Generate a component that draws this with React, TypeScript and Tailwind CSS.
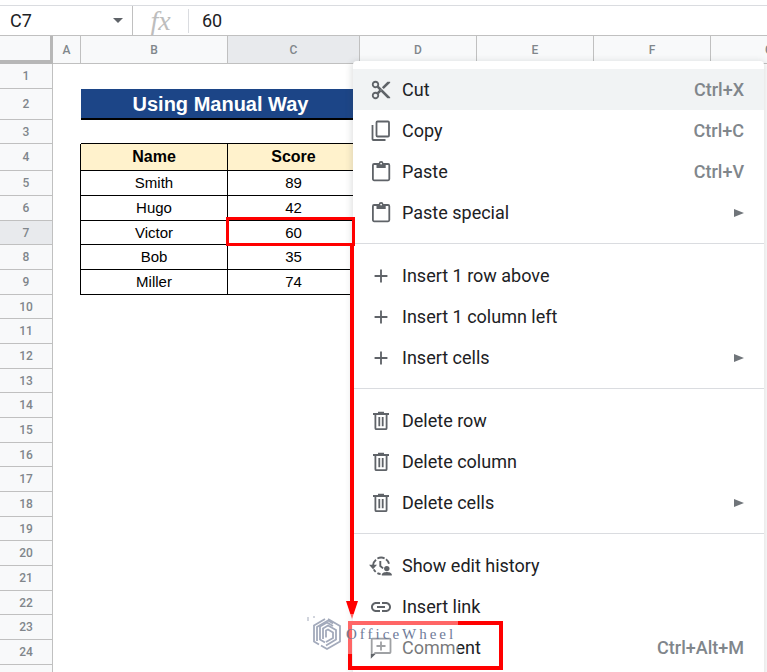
import type { ReactNode } from 'react'
import clsx from 'clsx'
import { MdAdd, MdContentCut, MdLink } from 'react-icons/md'

type Item = {
  label: string
  icon: ReactNode
  shortcut?: string
  submenu?: boolean
  active?: boolean
}

function CopyIcon() {
  return (
    <svg viewBox="0 0 24 24" fill="none" stroke="currentColor" strokeWidth="1.8" className="size-6">
      <rect x="7.500" y="2.500" width="12.500" height="15" rx="1" />
      <path d="M3.500 6v14.200c0 .5.3.8.8.8H16.500" />
    </svg>
  )
}

function PasteIcon() {
  return (
    <svg viewBox="0 0 24 24" fill="none" stroke="currentColor" strokeWidth="1.800" className="size-6">
      <rect x="3.900" y="4" width="16.400" height="16.300" rx="1.200" />
      <path d="M7.500 3.500h2.200a2.400 2.400 0 0 1 4.800 0h2.200V8H7.500z" fill="currentColor" stroke="none" />
      <circle cx="12.100" cy="3.600" r="0.900" fill="#fff" stroke="none" />
    </svg>
  )
}

function TrashIcon() {
  return (
    <svg viewBox="0 0 24 24" fill="none" stroke="currentColor" strokeWidth="1.800" className="size-6">
      <path d="M4 5h16M9 3.600h6" />
      <path d="M6.400 5v14.200c0 .6.4 1 1 1h9.200c.6 0 1-.4 1-1V5" />
      <path d="M10.300 8v9.200M13.700 8v9.200" />
    </svg>
  )
}

function HistoryIcon() {
  return (
    <svg viewBox="0 0 24 24" fill="none" stroke="currentColor" strokeWidth="1.900" className="size-6">
      <path d="M4 11.500a8.200 8.200 0 0 1 3-5.800M8.400 4.500a8.200 8.200 0 0 1 7.200-.2M17 5.200a8.200 8.200 0 0 1 3 4.600" />
      <path d="M4.800 15.300a8.200 8.200 0 0 0 1.900 2.600M8.400 19.100a8.200 8.200 0 0 0 3.200.9" />
      <path d="M11.300 7v5l2.800 2.400" />
      <path d="M0 10.800h8l-4 4.400z" fill="currentColor" stroke="none" />
      <circle cx="17.800" cy="14.600" r="2.700" fill="currentColor" stroke="none" />
      <path d="M12.800 21.500v-1c0-1.700 3.300-2.500 5-2.500s5 .8 5 2.500v1z" fill="currentColor" stroke="none" />
    </svg>
  )
}

function CommentIcon() {
  return (
    <svg viewBox="0 0 24 24" fill="none" stroke="currentColor" strokeWidth="1.800" className="size-6">
      <path d="M2.700 20.500V3.500c0-.5.3-.8.8-.8h17.200c.5 0 .8.300.8.800v12.700c0 .5-.3.800-.8.800H6.200z" />
      <path d="M12 5.500v9M7.500 10h9" />
    </svg>
  )
}

const groups: Item[][] = [
  [
    { label: 'Cut', icon: <MdContentCut className="size-[22px]" />, shortcut: 'Ctrl+X', active: true },
    { label: 'Copy', icon: <CopyIcon />, shortcut: 'Ctrl+C' },
    { label: 'Paste', icon: <PasteIcon />, shortcut: 'Ctrl+V' },
    { label: 'Paste special', icon: <PasteIcon />, submenu: true },
  ],
  [
    { label: 'Insert 1 row above', icon: <MdAdd className="size-[22px]" /> },
    { label: 'Insert 1 column left', icon: <MdAdd className="size-[22px]" /> },
    { label: 'Insert cells', icon: <MdAdd className="size-[22px]" />, submenu: true },
  ],
  [
    { label: 'Delete row', icon: <TrashIcon /> },
    { label: 'Delete column', icon: <TrashIcon /> },
    { label: 'Delete cells', icon: <TrashIcon />, submenu: true },
  ],
  [
    { label: 'Show edit history', icon: <HistoryIcon /> },
    { label: 'Insert link', icon: <MdLink className="size-6" /> },
    { label: 'Comment', icon: <CommentIcon />, shortcut: 'Ctrl+Alt+M' },
  ],
]

const scores: Record<number, [string, string]> = {
  5: ['Smith', '89'],
  6: ['Hugo', '42'],
  7: ['Victor', '60'],
  8: ['Bob', '35'],
  9: ['Miller', '74'],
}

const columns = ['A', 'B', 'C', 'D', 'E', 'F', 'G']
const rows = Array.from({ length: 25 }, (_, i) => i + 1)

function rowHeight(row: number) {
  if (row === 2) return 'h-[31px]'
  if (row === 4) return 'h-[27px]'
  // rows drift between 24 and 25 at this zoom level
  return row === 3 || (row > 4 && row % 3 === 1) ? 'h-[24px]' : 'h-[25px]'
}

function FormulaBar() {
  return (
    <div className="flex h-9 flex-col pt-[5px]">
      <div className="flex flex-1 items-center border-y border-t-[#dadce0] border-b-[#c0c0c0] text-lg text-[#202124]">
        <input aria-label="Name box" defaultValue="C7" className="w-[104px] pl-[10px] leading-6 outline-none" />
        <button aria-label="Open named ranges" className="flex h-full w-[29px] items-center justify-center border-r border-[#c0c0c0]">
          <svg viewBox="0 0 10 5" fill="#5f6368" className="h-[5px] w-[10px]">
            <path d="M0 0h10L5 5z" />
          </svg>
        </button>
        <span className="w-[55px] text-center font-['Liberation_Serif',serif] text-[28px] leading-6 text-[#bdbdbd] italic">
          fx
        </span>
        <input
          aria-label="Formula"
          defaultValue="60"
          className="min-w-0 flex-1 border-l border-[#dadce0] pl-[13px] leading-6 outline-none"
        />
      </div>
    </div>
  )
}

function SheetCells({ row }: { row: number }) {
  if (row === 2) {
    return (
      <>
        <td />
        <td
          colSpan={2}
          className="border-b-2 border-black bg-[#1c4587] text-center text-xl leading-6 font-bold text-white"
        >
          Using Manual Way
        </td>
      </>
    )
  }
  if (row === 3) {
    return (
      <>
        <td />
        <td className="border-b border-black" />
        <td className="border-b border-black" />
      </>
    )
  }
  if (row === 4) {
    return (
      <>
        <td className="border-r border-black" />
        {['Name', 'Score'].map((name) => (
          <th key={name} scope="col" className="border-r border-b border-black bg-[#fff2cc] text-base leading-5 font-bold">
            {name}
          </th>
        ))}
      </>
    )
  }
  if (scores[row]) {
    return (
      <>
        <td className="border-r border-black" />
        {scores[row].map((value) => (
          <td key={value} className="border-r border-b border-black text-center text-[15px] leading-5">
            {value}
          </td>
        ))}
      </>
    )
  }
  return <td colSpan={3} />
}

function Sheet() {
  return (
    <table className="w-[828px] table-fixed border-separate border-spacing-0 font-['Liberation_Sans',Arial,sans-serif] text-black">
      <colgroup>
        <col className="w-[53px]" />
        <col className="w-[28px]" />
        <col className="w-[147px]" />
        <col className="w-[132px]" />
        <col className="w-[117px]" />
        <col className="w-[117px]" />
        <col className="w-[117px]" />
        <col className="w-[117px]" />
      </colgroup>
      <thead>
        <tr className="h-7">
          <td className="border-r-[3px] border-b-4 border-[#b7b7b7] bg-[#f8f9fa]" />
          {columns.map((col) => (
            <th
              key={col}
              scope="col"
              className={clsx(
                "border-r border-b border-[#c0c0c0] font-['Roboto',sans-serif] text-xs leading-4 font-medium text-[#80868b]",
                col === 'C' ? 'bg-[#e8eaed]' : 'bg-[#f8f9fa]',
              )}
            >
              {col}
            </th>
          ))}
        </tr>
      </thead>
      <tbody>
        {rows.map((row) => (
          <tr key={row} className={rowHeight(row)}>
            <th
              scope="row"
              className={clsx(
                "border-r border-b border-[#c0c0c0] font-['Roboto',sans-serif] text-xs leading-4 font-medium text-[#80868b]",
                row === 7 ? 'bg-[#e8eaed]' : 'bg-[#f8f9fa]',
              )}
            >
              {row}
            </th>
            <SheetCells row={row} />
            <td colSpan={4} />
          </tr>
        ))}
      </tbody>
    </table>
  )
}

function ContextMenu() {
  return (
    <div
      role="menu"
      className="absolute top-[61px] right-[3px] left-[353px] rounded bg-white py-2 shadow-[0_2px_6px_2px_rgba(60,64,67,0.15)]"
    >
      {groups.map((group, i) => (
        <div key={i} role="group" className={clsx(i > 0 && 'mt-[10px] border-t border-[#dadce0] pt-[11px]')}>
          {group.map((item) => (
            <button
              key={item.label}
              role="menuitem"
              className={clsx(
                'flex h-[41px] w-full items-center gap-[9px] pr-5 pl-4 text-left text-lg leading-6 text-[#202124]',
                item.active && 'bg-[#f1f3f4]',
              )}
            >
              <span className="flex size-6 items-center justify-center text-[#5f6368]">{item.icon}</span>
              <span className="flex-1">{item.label}</span>
              {item.shortcut && <span className="font-medium text-[#80868b]">{item.shortcut}</span>}
              {item.submenu && (
                <svg viewBox="0 0 10 8" fill="#70757a" className="h-2 w-[10px]">
                  <path d="M0 0l10 4-10 4z" />
                </svg>
              )}
            </button>
          ))}
        </div>
      ))}
    </div>
  )
}

function Annotations() {
  return (
    <div className="pointer-events-none">
      <div className="absolute top-[217px] left-[226px] h-[29px] w-[129px] border-[3px] border-[#ff0000]" />
      <svg viewBox="0 0 12 374" fill="#ff0000" className="absolute top-[245px] left-[346px] h-[374px] w-3">
        <path d="M4 0h4v356h4l-6 18-6-18h4z" />
      </svg>
      <div className="absolute top-[621px] left-[348px] h-[49px] w-[155px] border-4 border-[#ff0000]" />
    </div>
  )
}

function Watermark() {
  return (
    <div className="pointer-events-none absolute top-[614px] left-[308px] flex h-10 w-[150px] items-center gap-1 bg-white/40 pl-1">
      <svg viewBox="0 0 30 34" fill="none" stroke="#a3aabb" strokeWidth="1.800" className="h-[34px] w-[30px] shrink-0 overflow-visible">
        <path d="M13 2L2 8.500v16l5 3M5 24V10l11-6.500 5 3M16 2l12 7v15.500L15 32l-6-3.500" />
        <path d="M21 9l-6-3.500-7 4v13l5 3M11 22V11.500l5-3 8 4.500v9.500L14 28.500" />
        <path d="M14 20.500v-7l2-1 5 3v5.500l-7 4" />
        <path d="M-4 0v4M1 0h2" strokeWidth="1" />
      </svg>
      <span className="font-['Liberation_Serif',serif] text-[15px] leading-5 tracking-[3px] text-[#6f7b99]">OfficeWheel</span>
    </div>
  )
}

export default function App() {
  return (
    <main className="relative h-screen overflow-hidden bg-white font-['Roboto',sans-serif]">
      <FormulaBar />
      <Sheet />
      <ContextMenu />
      <Annotations />
      <Watermark />
    </main>
  )
}
